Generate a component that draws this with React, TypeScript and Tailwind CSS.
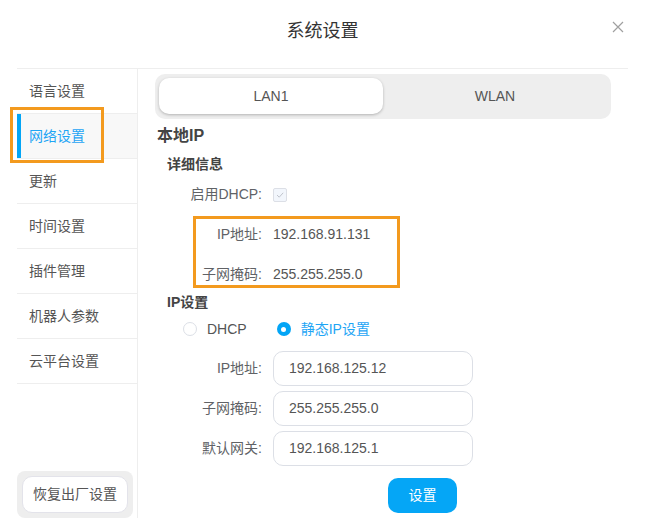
import React from "react";

const items = ["语言设置", "网络设置", "更新", "时间设置", "插件管理", "机器人参数", "云平台设置"];

function Label({ children }: { children: React.ReactNode }) {
  return <div className="w-[95px] text-right text-[14px] text-[#606266]">{children}</div>;
}

function InputRow({ label, value }: { label: string; value: string }) {
  return (
    <div className="flex items-center">
      <Label>{label}</Label>
      <div className="ml-[11px] flex h-[35px] w-[200px] items-center rounded-[10px] border border-[#dcdfe6] bg-white pl-[15px] text-[14px] text-[#555]">
        {value}
      </div>
    </div>
  );
}

export default function App() {
  return (
    <div
      className="relative h-[532px] w-[645px] overflow-hidden bg-white"
      style={{ fontFamily: '"Liberation Sans", "Noto Sans CJK SC", sans-serif' }}
    >
      {/* header */}
      <div className="relative h-[68px] pt-[19px] text-center text-[18px] leading-[24px] text-[#333]">
        系统设置
        <svg className="absolute left-[612px] top-[21px]" width="12" height="12" viewBox="0 0 12 12">
          <path d="M1 1 L11 11 M11 1 L1 11" stroke="#a0a0a0" strokeWidth="1.2" fill="none" />
        </svg>
      </div>

      <div className="mx-[17px] flex h-[450px] border-t border-[#eeeeee]">
        {/* sidebar */}
        <div className="flex w-[121px] flex-col border-r border-[#eeeeee]">
          {items.map((it, i) => (
            <div
              key={it}
              className={
                "relative flex h-[45px] items-center border-b border-[#eeeeee] pl-3 text-[14px] " +
                (i === 1 ? "bg-[#f8f8f8] text-[#1ea5f5]" : "text-[#555]")
              }
            >
              {i === 1 && <div className="absolute left-0 top-0 h-full w-[4px] bg-[#03a5f6]" />}
              {it}
            </div>
          ))}
          <div className="flex-1" />
          <div className="w-[116px] rounded-[8px] bg-[#eeeeee] p-[5px]">
            <div className="flex h-[37px] items-center justify-center rounded-[10px] border border-[#e3e3ea] bg-white text-[14px] text-[#555]">
              恢复出厂设置
            </div>
          </div>
        </div>

        {/* content */}
        <div className="flex-1 pl-[17px] pr-[17px] pt-[5px]">
          <div className="grid h-[45px] grid-cols-2 rounded-[10px] bg-[#eeeeee] p-[4px]">
            <div className="flex h-[36px] items-center justify-center rounded-[10px] bg-white text-[14px] text-[#555] shadow-[0_1px_3px_rgba(0,0,0,0.25)]">
              LAN1
            </div>
            <div className="flex h-[36px] items-center justify-center text-[14px] text-[#555]">WLAN</div>
          </div>

          <div className="flex h-[34px] items-center pl-[2px] text-[16px] font-bold text-[#444]">本地IP</div>
          <div className="flex h-[22px] items-center pl-[12px] text-[14px] font-bold text-[#444]">详细信息</div>

          <div className="pl-[12px]">
            <div className="flex h-[39px] items-center">
              <Label>启用DHCP:</Label>
              <div className="ml-[11px] flex h-[14px] w-[14px] items-center justify-center rounded-[2px] border border-[#dcdfe6] bg-[#f2f6fc]">
                <svg width="10" height="10" viewBox="0 0 10 10">
                  <path d="M2 5 L4.2 7.2 L8.2 2.8" stroke="#c0c4cc" strokeWidth="1" fill="none" />
                </svg>
              </div>
            </div>
            <div className="flex h-[40px] items-center">
              <Label>IP地址:</Label>
              <div className="ml-[11px] text-[14px] text-[#555]">192.168.91.131</div>
            </div>
            <div className="flex h-[40px] items-center">
              <Label>子网掩码:</Label>
              <div className="ml-[11px] text-[14px] text-[#555]">255.255.255.0</div>
            </div>
          </div>

          <div className="flex h-[16px] items-center pl-[12px] text-[14px] font-bold text-[#444]">IP设置</div>

          <div className="flex h-[38px] items-center pl-[28px] text-[14px]">
            <div className="h-[14px] w-[14px] rounded-full border border-[#dcdfe6] bg-white" />
            <span className="ml-[10px] text-[#555]">DHCP</span>
            <div className="ml-[30px] flex h-[14px] w-[14px] items-center justify-center rounded-full bg-[#03a5f6]">
              <div className="h-[5px] w-[5px] rounded-full bg-white" />
            </div>
            <span className="ml-[10px] text-[#1ea5f5]">静态IP设置</span>
          </div>

          <div className="mt-[3px] flex flex-col gap-[5px] pl-[12px]">
            <InputRow label="IP地址:" value="192.168.125.12" />
            <InputRow label="子网掩码:" value="255.255.255.0" />
            <InputRow label="默认网关:" value="192.168.125.1" />
          </div>

          <div className="mt-[12px] flex pl-[233px]">
            <div className="flex h-[35px] w-[69px] items-center justify-center rounded-[10px] bg-[#05a6f6] text-[14px] text-white">
              设置
            </div>
          </div>
        </div>
      </div>

      {/* annotation boxes */}
      <div className="pointer-events-none absolute left-[10px] top-[107px] h-[56px] w-[94px] border-[3px] border-[#f39a1e]" />
      <div className="pointer-events-none absolute left-[193px] top-[216px] h-[72px] w-[207px] border-[3px] border-[#f39a1e]" />
    </div>
  );
}
